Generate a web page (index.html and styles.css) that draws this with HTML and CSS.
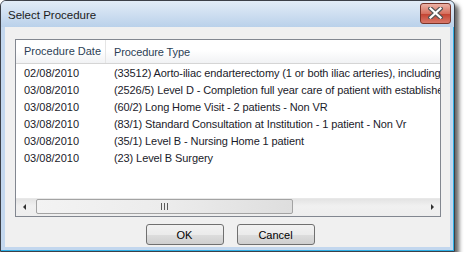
FILE: index.html
```html
<!DOCTYPE html>
<html lang="en">
<head>
    <meta charset="UTF-8">
    <title>Select Procedure</title>
    <link rel="stylesheet" href="styles.css">
</head>
<body>

    <div class="window">
        <!-- Заголовок окна -->
        <div class="titlebar">
            <span class="title">Select Procedure</span>
            <button class="close-btn" title="Close">
                <svg width="15" height="12" viewBox="0 0 15 12">
                    <path d="M2.5 1.5 L12.5 10.5 M12.5 1.5 L2.5 10.5" stroke="#555555" stroke-width="4.5" stroke-linecap="square"/>
                    <path d="M2.5 1.5 L12.5 10.5 M12.5 1.5 L2.5 10.5" stroke="#ffffff" stroke-width="2.2" stroke-linecap="square"/>
                </svg>
            </button>
        </div>

        <div class="client">
            <div class="listview">
                <div class="list-header">
                    <div class="col col-date">Procedure Date</div>
                    <div class="col col-type">Procedure Type</div>
                </div>
                <div class="list-body" id="rows"></div>
                <div class="hscroll">
                    <div class="arrow arrow-left"></div>
                    <div class="track">
                        <div class="thumb"><span class="grip"></span></div>
                    </div>
                    <div class="arrow arrow-right"></div>
                </div>
            </div>

            <div class="buttons">
                <button class="btn">OK</button>
                <button class="btn">Cancel</button>
            </div>
        </div>
    </div>

    <script>
        const procedures = [
            ["02/08/2010", "(33512) Aorto-iliac endarterectomy (1 or both iliac arteries), including closure"],
            ["03/08/2010", "(2526/5) Level D - Completion full year care of patient with established condition"],
            ["03/08/2010", "(60/2) Long Home Visit - 2 patients - Non VR"],
            ["03/08/2010", "(83/1) Standard Consultation at Institution - 1 patient - Non Vr"],
            ["03/08/2010", "(35/1) Level B - Nursing Home 1 patient"],
            ["03/08/2010", "(23) Level B Surgery"]
        ];

        document.getElementById("rows").innerHTML = procedures.map(p => `
            <div class="row">
                <div class="col col-date">${p[0]}</div>
                <div class="col col-type">${p[1]}</div>
            </div>
        `).join('');
    </script>

</body>
</html>
```

FILE: styles.css
```css
body {
    margin: 0;
    padding: 0;
    background-color: #ffffff;
    font-family: "Liberation Sans", Arial, sans-serif;
    font-size: 11px;
}

.window {
    width: 455px;
    height: 252px;
    border: 1px solid #3c4048;
    border-radius: 6px 6px 0 0;
    background-color: #c3d7ee;
    box-shadow: -1px -1px 0 #2fb0e6 inset, 4px 4px 4px rgba(0, 0, 0, 0.6);
    display: flex;
    flex-direction: column;
    box-sizing: border-box;
    padding: 0 4px 4px 4px;
}

.titlebar {
    height: 26px;
    display: flex;
    align-items: center;
    justify-content: space-between;
    background: linear-gradient(#e2ecf7, #bad1ea);
    margin: 0 -4px;
    padding: 0 3px 0 7px;
    border-radius: 5px 5px 0 0;
    flex-shrink: 0;
}

.title {
    color: #1b1b1b;
    font-size: 11.5px;
    padding-top: 2px;
}

.close-btn {
    width: 31px;
    height: 21px;
    margin-top: -2px;
    border: 1px solid #7a3429;
    border-radius: 3px;
    background: linear-gradient(#ecb3a6, #d6705f 50%, #c2412f 51%, #d9786a);
    display: flex;
    align-items: center;
    justify-content: center;
    padding: 0;
}

.client {
    flex: 1;
    background-color: #f0f0f0;
    padding: 12px 0 0 10px;
}

/* Список процедур */
.listview {
    width: 426px;
    height: 178px;
    border: 1px solid #828790;
    background-color: #ffffff;
    box-sizing: border-box;
    display: flex;
    flex-direction: column;
    overflow: hidden;
}

.list-header {
    height: 23px;
    display: flex;
    align-items: center;
    background: linear-gradient(#ffffff 45%, #f1f2f4);
    border-bottom: 1px solid #d5d5d5;
    color: #2c3e55;
    flex-shrink: 0;
}

.list-body {
    flex: 1;
    color: #1a1a2a;
}

.row {
    height: 17px;
    display: flex;
    align-items: center;
}

.col {
    white-space: nowrap;
    padding-left: 8px;
    box-sizing: border-box;
}

.col-date {
    width: 90px;
    flex-shrink: 0;
}

.list-header .col-date {
    border-right: 1px solid #e5e5e5;
    height: 23px;
    line-height: 23px;
}

.col-type {
    flex-shrink: 0;
    letter-spacing: -0.1px;
}

/* Горизонтальная прокрутка */
.hscroll {
    height: 17px;
    display: flex;
    background: linear-gradient(#e3e3e3, #f0f0f0 40%, #eeeeee);
    border-top: 1px solid #e8e8e8;
    flex-shrink: 0;
}

.arrow {
    width: 17px;
    position: relative;
}

.arrow::after {
    content: "";
    position: absolute;
    top: 5px;
    width: 0;
    height: 0;
    border-top: 3px solid transparent;
    border-bottom: 3px solid transparent;
}

.arrow-left::after {
    left: 7px;
    border-right: 3px solid #303030;
}

.arrow-right::after {
    left: 8px;
    border-left: 3px solid #303030;
}

.track {
    flex: 1;
    padding-left: 3px;
}

.thumb {
    width: 257px;
    height: 15px;
    border: 1px solid #a3a3a3;
    border-radius: 2px;
    background: linear-gradient(90deg, #f3f3f3, #ececec 50%, #dedede);
    display: flex;
    align-items: center;
    justify-content: center;
    box-sizing: border-box;
}

.grip {
    width: 7px;
    height: 7px;
    background: repeating-linear-gradient(90deg, #5a5a5a 0 1px, transparent 1px 3px);
}

/* Кнопки */
.buttons {
    display: flex;
    justify-content: center;
    gap: 13px;
    margin-top: 7px;
    margin-left: 2px;
    width: 426px;
}

.btn {
    width: 78px;
    height: 21px;
    font-family: "Liberation Sans", Arial, sans-serif;
    font-size: 11px;
    color: #000000;
    border: 1px solid #707070;
    border-radius: 3px;
    background: linear-gradient(#f2f2f2, #ebebeb 50%, #dddddd 51%, #cfcfcf);
    padding: 0;
}
```
